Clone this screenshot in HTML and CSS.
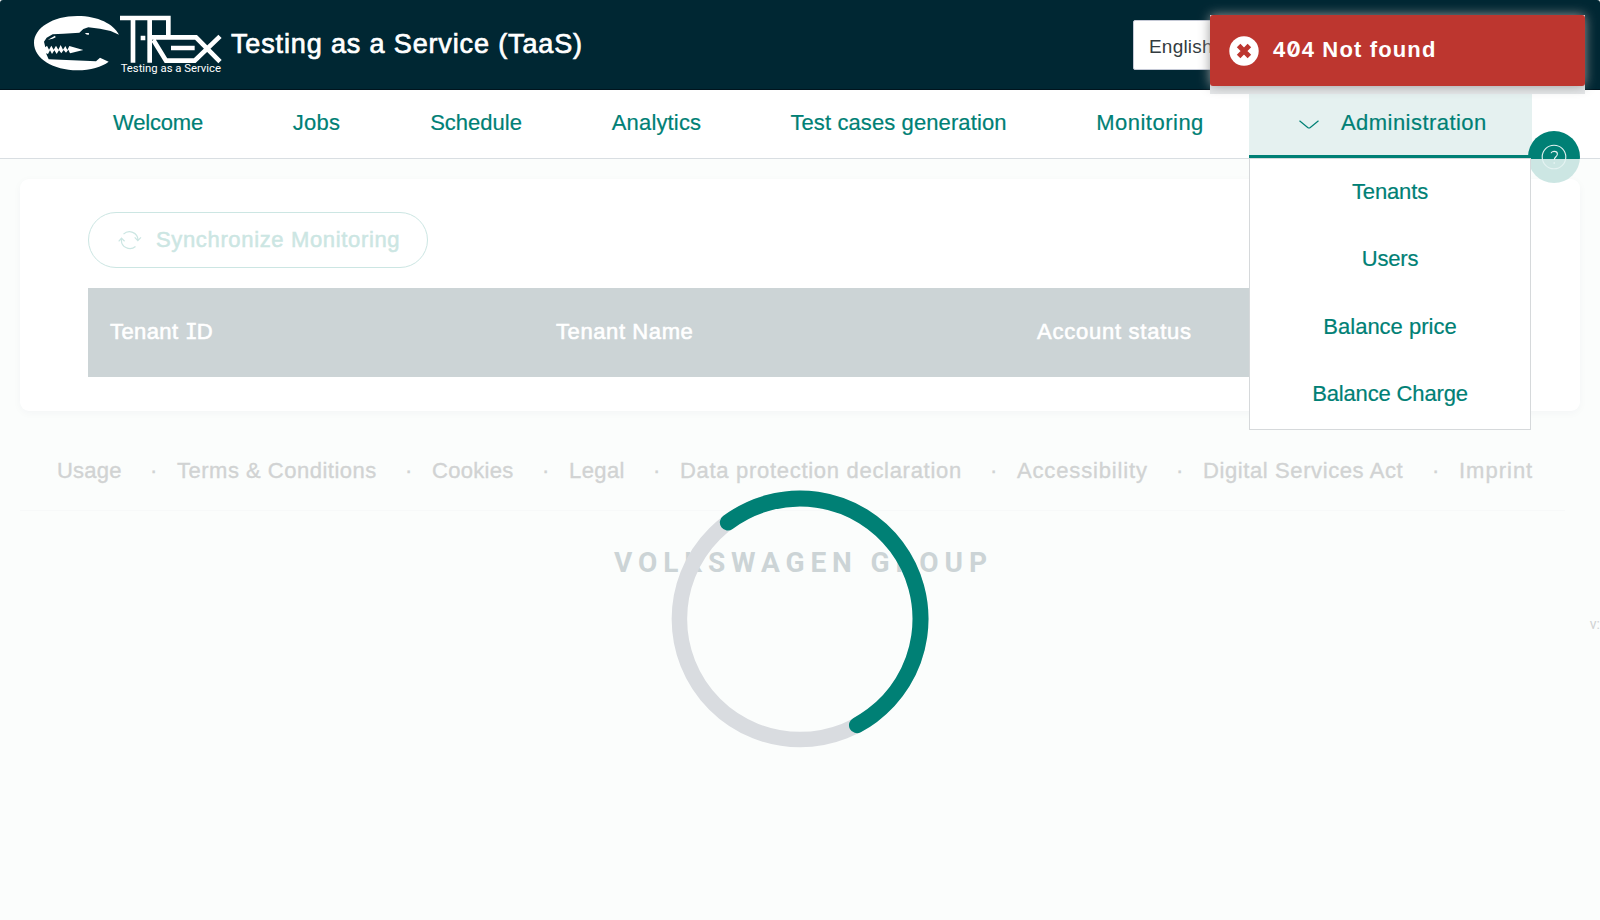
FILE: index.html
```html
<!DOCTYPE html>
<html lang="en">
<head>
<meta charset="utf-8">
<title>Testing as a Service (TaaS)</title>
<link rel="stylesheet" href="styles.css">
</head>
<body>
<header class="header">
  <svg class="logo" viewBox="0 0 615 270" aria-label="T-Rex">
    <path fill="#fff" d="M297 104C280 72 235 48 172 48C98 48 42 84 42 129C42 175 100 211 172 211C212 211 245 201 266 185L240 173L228 184L86 178L78 160L84 162L90 151L96 162L103 151L110 162L117 151L124 160L131 150L138 158L145 149L150 160L190 150L148 138L142 150L136 138L129 149L122 135L115 149L108 137L101 149L94 137L87 149L81 137L76 142L72 125L80 113L98 103L130 101L178 98L190 87L205 82L240 86L272 93Z"/>
    <path fill="#fff" d="M84 119L105 107L107 112L98 116ZM195 99L207 99L206 105L198 103Z"/>
    <g fill="none" stroke="#fff" stroke-width="14">
      <path d="M300 54H445V112M339 54V188M389 54V188M396 112H528L600 185M600 109L524 182H438L400 120"/>
      <path d="M453 144H524M362 114H376" stroke-width="13"/>
    </g>
    <text class="logo-text" x="302" y="215" textLength="301" lengthAdjust="spacingAndGlyphs">Testing as a Service</text>
  </svg>
  <h1 class="title">Testing as a Service (TaaS)</h1>
  <div class="language">English</div>
</header>

<nav class="nav">
  <a class="nav-link welcome">Welcome</a>
  <a class="nav-link jobs">Jobs</a>
  <a class="nav-link schedule">Schedule</a>
  <a class="nav-link analytics">Analytics</a>
  <a class="nav-link generation">Test cases generation</a>
  <a class="nav-link monitoring">Monitoring</a>
  <div class="nav-active">
    <svg class="chevron" viewBox="0 0 20 9"><path d="M.5.7L8.7 7.5Q10 8.5 11.3 7.5L19.5.7"/></svg>
    <span class="administration">Administration</span>
    <div class="menu">
      <a class="tenants">Tenants</a>
      <a class="users">Users</a>
      <a>Balance price</a>
      <a class="charge">Balance Charge</a>
    </div>
  </div>
</nav>

<main class="card">
  <button class="sync">
    <svg class="sync-icon" viewBox="0 0 24 20"><path d="M5.5 4.2A8.5 8.5 0 0 1 20 10M16.7 7.3L19.8 10.6L23 7.3M17.5 16.5A8.5 8.5 0 0 1 3.5 9M.7 11.4L3.5 8.2L6.6 11.2"/></svg>
    <span>Synchronize Monitoring</span>
  </button>
  <div class="table-head">
    <span>Tenant <span class="serif-cap">I</span>D</span>
    <span class="th-name">Tenant Name</span>
    <span class="th-status">Account status</span>
  </div>
</main>

<footer class="footer">
  <div class="links">
    <a class="f-usage">Usage</a><i>·</i>
    <a class="f-terms">Terms &amp; Conditions</a><i>·</i>
    <a class="f-cookies">Cookies</a><i>·</i>
    <a class="f-legal">Legal</a><i>·</i>
    <a class="f-data">Data protection declaration</a><i>·</i>
    <a class="f-access">Accessibility</a><i>·</i>
    <a class="f-digital">Digital Services Act</a><i>·</i>
    <a class="f-imprint">Imprint</a>
  </div>
  <div class="brand">VOLKSWAGEN GROUP</div>
  <div class="version">v:</div>
</footer>

<div class="help">
  <svg viewBox="0 0 52 52"><circle cx="26" cy="26" r="11.8"/><path d="M23.2 22.3C23.2 19.9 29.4 19.4 29.4 23C29.4 25.8 26.2 25.8 26.2 29M26.2 31V33"/></svg>
</div>

<svg class="spinner" viewBox="0 0 258 258">
  <circle class="track" cx="129" cy="129" r="120.6"/>
  <circle class="arc" cx="129" cy="129" r="120.5" pathLength="360" stroke-dasharray="188.6 171.4" transform="rotate(-126.8 129 129)"/>
</svg>

<div class="toast-wrap">
  <div class="toast">
    <svg class="error-icon" viewBox="0 0 30 30"><circle cx="15" cy="15" r="14.7" fill="#fff" stroke="none"/><path d="M9.6 9.6L20.4 20.4M20.4 9.6L9.6 20.4"/></svg>
    <span class="toast-text">4<span class="zero">0</span>4 Not found</span>
  </div>
</div>
</body>
</html>
```
FILE: styles.css
```css
* { box-sizing: border-box; }
html { background: #fff; }
body {
  margin: 0;
  width: 1600px;
  height: 920px;
  overflow: hidden;
  position: relative;
  background: #fbfdfc;
  font-family: "Liberation Sans", Arial, sans-serif;
  font-size: 22px;
  color: #008075;
}
.header {
  height: 90px;
  display: flex;
  align-items: center;
  padding-left: 20px;
  background: #002733;
  border-bottom: 1px solid #00141e;
  border-radius: 3px 3px 0 0;
}
.logo { width: 205px; height: 90px; flex: none; }
.logo-text { font: 32px Roboto, sans-serif; fill: #fff; }
.title {
  margin: 0 0 0 6px;
  width: 901px;
  font-size: 27px;
  font-weight: 400;
  letter-spacing: .86px;
  color: #fff;
  -webkit-text-stroke: .7px #fff;
}
.language {
  width: 240px;
  height: 50px;
  margin-left: 1px;
  padding-left: 15px;
  line-height: 51px;
  font-size: 19px;
  letter-spacing: .2px;
  color: #333b40;
  background: #fff;
  border: 1px solid #c5c9d6;
  border-radius: 2px;
}
.nav {
  height: 69px;
  display: flex;
  padding-left: 68px;
  line-height: 66px;
  background: #fff;
  border-bottom: 1px solid #d9dee2;
}
.nav-link { text-align: center; white-space: nowrap; -webkit-text-stroke: .2px #008075; }
.welcome { width: 180px; letter-spacing: -.2px; }
.jobs { width: 137px; letter-spacing: .3px; }
.schedule { width: 182px; }
.analytics { width: 179px; letter-spacing: .15px; }
.generation { width: 305px; letter-spacing: .1px; }
.monitoring { width: 198px; letter-spacing: .5px; }
.nav-active {
  position: relative;
  width: 283px;
  height: 68px;
  display: flex;
  align-items: center;
  padding: 0 0 0 50px;
  background: #e5f1f0;
  border-bottom: 3px solid #008075;
  -webkit-text-stroke: .2px #008075;
}
.chevron { width: 20px; height: 9px; margin-top: 3px; fill: none; stroke: #008075; stroke-width: 1.2; }
.administration { margin-left: 22px; letter-spacing: .45px; }
.menu {
  position: absolute;
  z-index: 3;
  left: 0;
  top: 68px;
  width: 282px;
  height: 272px;
  padding-bottom: 2px;
  display: grid;
  grid-template-rows: repeat(4, 67.4px);
  text-align: center;
  line-height: 66px;
  background: #fff;
  border: 1px solid #d6d9db;
}
.tenants { letter-spacing: -.15px; }
.users { letter-spacing: -.15px; }
.charge { letter-spacing: -.15px; }
.card {
  height: 232px;
  margin: 20px 20px 0;
  padding: 33px 68px 34px;
  display: flex;
  flex-direction: column;
  gap: 20px;
  background: #fff;
  border-radius: 9px;
  box-shadow: 0 2px 8px rgba(0, 30, 80, .035);
}
.sync {
  width: 340px;
  height: 56px;
  flex: none;
  display: flex;
  align-items: center;
  padding: 0 0 1px 29px;
  gap: 14px;
  font: 22px "Liberation Sans", Arial, sans-serif;
  letter-spacing: .65px;
  color: #cce6e3;
  -webkit-text-stroke: .5px #cce6e3;
  background: #fff;
  border: 1px solid #cce6e3;
  border-radius: 28px;
  white-space: nowrap;
}
.sync-icon { width: 24px; height: 20px; fill: none; stroke: #cce6e3; stroke-width: 1.2; }
.table-head {
  height: 89px;
  display: grid;
  grid-template-columns: 446px 481px 1fr;
  align-items: center;
  padding: 0 0 2px 22px;
  background: #ccd4d6;
  color: #fff;
  letter-spacing: .4px;
  -webkit-text-stroke: .6px #fff;
}
.th-name { letter-spacing: .6px; }
.th-status { letter-spacing: .75px; }
.serif-cap { font-family: "DejaVu Sans Mono", monospace; font-size: 21px; line-height: 1; letter-spacing: -1px; }
.footer { color: #d1d3d3; }
.links {
  height: 100px;
  margin: 0 35px 0 20px;
  padding: 47px 0 0 37px;
  display: flex;
  line-height: 26px;
  border-bottom: 1px solid #f7f9f9;
  white-space: nowrap;
  -webkit-text-stroke: .35px #d1d3d3;
}
.links i { width: 55px; padding-left: 28px; font-style: normal; }
.links a { flex: none; }
.f-usage { width: 65px; letter-spacing: .2px; }
.f-terms { width: 200px; letter-spacing: .5px; }
.f-cookies { width: 82px; letter-spacing: .3px; }
.f-legal { width: 56px; letter-spacing: .4px; }
.f-data { width: 282px; letter-spacing: .7px; }
.f-access { width: 131px; letter-spacing: .85px; }
.f-digital { width: 201px; letter-spacing: .6px; }
.f-imprint { width: 76px; letter-spacing: 1px; }
.brand {
  margin-top: 35px;
  padding-left: 614px;
  font: bold 28px/34px Roboto, sans-serif;
  letter-spacing: 5.9px;
  color: #ccd4d6;
}
.version { margin-top: 35px; height: 20px; text-align: right; font: 14px/18px Roboto, sans-serif; }
.help {
  position: absolute;
  z-index: 2;
  left: 1528px;
  top: 131px;
  width: 52px;
  height: 52px;
  border-radius: 50%;
  background: linear-gradient(#008075 28px, #cce6e3 28px);
}
.help svg { display: block; fill: none; stroke: #e5f3f2; stroke-width: 1.1; }
.spinner { position: absolute; left: 671px; top: 490px; width: 258px; height: 258px; fill: none; stroke-width: 15.5; }
.track { stroke: #d9dce0; }
.arc { stroke: #008075; stroke-linecap: round; stroke-width: 16; }
.toast-wrap {
  position: absolute;
  z-index: 5;
  left: 1210px;
  top: 15px;
  width: 375px;
  height: 79px;
  background: #e5e7e9;
}
.toast {
  height: 71px;
  display: flex;
  align-items: center;
  gap: 14px;
  padding-left: 19px;
  font-weight: 700;
  letter-spacing: 1.15px;
  color: #fff;
  background: #bd362f;
  border-radius: 3px;
  box-shadow: 0 0 12px #999;
}
.toast-text { margin-bottom: 2px; }
.error-icon { width: 30px; height: 30px; flex: none; fill: none; stroke: #bd362f; stroke-width: 5; }
.zero { font-family: Inter, sans-serif; font-size: 21px; line-height: 1; font-feature-settings: "zero"; }
```
